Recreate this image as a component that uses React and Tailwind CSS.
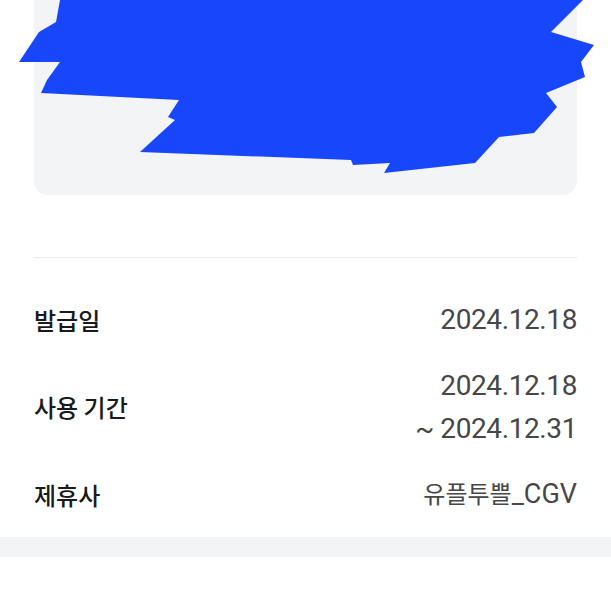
import React from 'react';

const rows = [
    { label: '발급일', values: ['2024.12.18'] },
    { label: '사용 기간', values: ['2024.12.18', '~ 2024.12.31'] },
];

const Scribble = () => (
    <svg
        className="absolute left-[-34px] top-0 w-[611px] h-[180px]"
        viewBox="0 0 611 180"
        fill="#1746fb"
    >
        <polygon points="60,0 583,0 551,32 594,45 581,62 585,77 546,93 557,107 534,133 499,137 475,163 384,173 390,163 353,165 351,160 140,152 175,120 168,117 179,100 41,93 47,80 60,62 19,62 39,32 56,22" />
    </svg>
);

const App = () => {
    return (
        <div className="w-[611px] h-[611px] bg-white overflow-hidden" style={{ fontFamily: '"Noto Sans CJK KR", sans-serif' }}>
            <div className="px-[34px]">
                <div className="relative h-[195px] bg-[#f2f4f6] rounded-b-[14px]">
                    <Scribble />
                </div>
                <div className="mt-[62px] h-px bg-[#ebebeb]" />

                <div className="mt-[45px] flex flex-col gap-[27px]">
                    {rows.map((row) => (
                        <div key={row.label} className="flex items-center justify-between">
                            <span className="text-[24px] leading-[34px] font-medium text-[#1a1a1a]">{row.label}</span>
                            <div className="flex flex-col items-end">
                                {row.values.map((v) => (
                                    <span
                                        key={v}
                                        className={`text-[28px] tracking-[-0.4px] text-[#474747] ${row.values.length > 1 ? 'leading-[43px]' : 'leading-[34px]'}`}
                                        style={{ fontFamily: 'Roboto, "Noto Sans CJK KR", sans-serif' }}
                                    >
                                        {v}
                                    </span>
                                ))}
                            </div>
                        </div>
                    ))}
                    <div className="flex items-center justify-between">
                        <span className="text-[24px] leading-[34px] font-medium text-[#1a1a1a]">제휴사</span>
                        <span
                            className="text-[27px] leading-[34px] text-[#474747]"
                            style={{ fontFamily: 'Roboto, "Noto Sans CJK KR", sans-serif' }}
                        >
                            <span className="text-[24px]">유플투쁠</span>_CGV
                        </span>
                    </div>
                </div>
            </div>
            <div className="mt-[25px] h-[20px] bg-[#f2f4f6]" />
        </div>
    );
};

export default App;
